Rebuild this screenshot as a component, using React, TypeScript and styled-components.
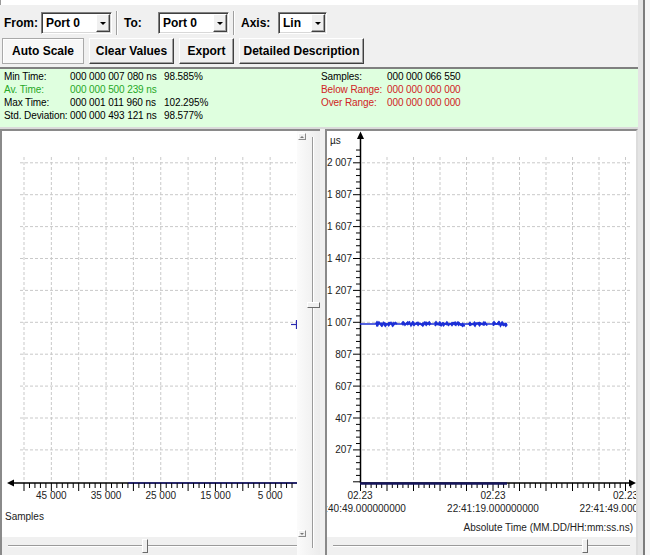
import React from "react";
import styled, { createGlobalStyle, css } from "styled-components";

const GlobalStyle = createGlobalStyle`
  html, body {
    margin: 0;
    padding: 0;
    background: #f0f0f0;
  }
  body {
    font-family: "Liberation Sans", Arial, sans-serif;
  }
`;

const Window = styled.div`
  display: flex;
  width: 650px;
  height: 555px;
  overflow: hidden;
  background: #f0f0f0;
`;

const Main = styled.div`
  width: 638px;
  display: flex;
  flex-direction: column;
`;

const SideStrip = styled.div`
  flex: 1;
  background: linear-gradient(to right, #e4e4e4 0 5px, #7c7c7c 5px 7px, #f6f6f6 7px);
`;

const TopStrip = styled.div`
  height: 5px;
  box-sizing: border-box;
  background: #fff;
  border-left: 1px solid #9a9a9a;
`;

const Toolbar = styled.div`
  height: 62px;
  box-sizing: border-box;
  padding-top: 7px;
  display: flex;
  flex-direction: column;
  gap: 4px;
`;

const ToolRow = styled.div`
  display: flex;
  align-items: center;
  height: 22px;
  padding-left: 4px;
`;

const Label = styled.span<{ $w: number }>`
  width: ${(p) => p.$w}px;
  font: bold 12px "Liberation Sans", Arial, sans-serif;
  color: #000;
`;

const Select = styled.div<{ $w: number }>`
  width: ${(p) => p.$w}px;
  height: 22px;
  box-sizing: border-box;
  display: flex;
  align-items: center;
  justify-content: space-between;
  padding: 0 1px 0 4px;
  background: #fff;
  border: 1px solid;
  border-color: #808080 #fff #fff #808080;
  box-shadow: inset 1px 1px 0 #404040, inset -1px -1px 0 #d8d8d8;
  font: bold 12px "Liberation Sans", Arial, sans-serif;
  color: #000;
`;

const DropButton = styled.span`
  width: 14px;
  height: 18px;
  box-sizing: border-box;
  display: flex;
  align-items: center;
  justify-content: center;
  background: #f0f0f0;
  border: 1px solid;
  border-color: #fff #404040 #404040 #fff;
  box-shadow: inset -1px -1px 0 #a0a0a0;

  &::after {
    content: "";
    border-left: 3px solid transparent;
    border-right: 3px solid transparent;
    border-top: 3px solid #000;
  }
`;

const Separator = styled.span`
  width: 0;
  height: 24px;
  margin: 0 6px 0 4px;
  border-left: 1px solid #a0a0a0;
  border-right: 1px solid #fff;
`;

const ButtonRow = styled.div`
  display: flex;
  gap: 5px;
  padding-left: 2px;
`;

const Button = styled.button<{ $w: number; $pressed?: boolean }>`
  width: ${(p) => p.$w}px;
  height: 26px;
  padding: 0;
  font: bold 12px "Liberation Sans", Arial, sans-serif;
  color: #000;
  background: #f0f0f0;
  border: 1px solid;
  border-color: #fff #404040 #404040 #fff;
  box-shadow: inset -1px -1px 0 #a0a0a0;
  ${(p) =>
    p.$pressed &&
    css`
      background: #f7f7f7;
      border-color: #a9a9a9;
      box-shadow: inset 1px 1px 0 #fff;
    `}
`;

const StatsPanel = styled.div`
  height: 62px;
  box-sizing: border-box;
  border-top: 2px solid #7f7f7f;
  border-bottom: 2px solid #dadada;
  background: #dfffdf;
  padding: 1px 0 0 4px;
  display: grid;
  grid-template-columns: 66px 94px 157px 66px 1fr;
  grid-auto-rows: 13px;
  font-size: 10px;
  line-height: 13px;
  letter-spacing: -0.1px;
`;

const Cell = styled.span<{ $tone?: "ok" | "bad" }>`
  white-space: nowrap;
  color: ${(p) => (p.$tone === "ok" ? "#26a826" : p.$tone === "bad" ? "#d02424" : "#000")};
`;

const ChartsRow = styled.div`
  flex: 1;
  display: flex;
`;

const LeftPanel = styled.div`
  width: 320px;
  box-sizing: border-box;
  display: flex;
  border-left: 2px solid #8a8a8a;
  border-top: 2px solid #8a8a8a;
`;

const PlotColumn = styled.div`
  width: 295px;
  display: flex;
  flex-direction: column;
`;

const Splitter = styled.div`
  width: 5px;
  background: #f0f0f0;
`;

const RightPanel = styled.div`
  flex: 1;
  box-sizing: border-box;
  display: flex;
  flex-direction: column;
  border-left: 2px solid #8a8a8a;
  border-top: 2px solid #8a8a8a;
  border-right: 2px solid #dcdcdc;
`;

const Plot = styled.svg`
  display: block;
  height: 406px;
  background: #fff;
  font-family: "Liberation Sans", Arial, sans-serif;
  font-size: 10px;
`;

const HScroll = styled.div<{ $pl: number; $pr: number }>`
  flex: 1;
  display: flex;
  align-items: center;
  padding: 0 ${(p) => p.$pr}px 0 ${(p) => p.$pl}px;
  background: #f0f0f0;
`;

const TrackH = styled.div`
  position: relative;
  flex: 1;
  height: 0;
  border-top: 1px solid #9a9a9a;
  border-bottom: 1px solid #fff;
`;

const ThumbH = styled.span`
  position: absolute;
  top: -7px;
  width: 4px;
  height: 12px;
  background: #f0f0f0;
  border: 1px solid;
  border-color: #fff #6a6a6a #6a6a6a #fff;
`;

const VScroll = styled.div`
  width: 23px;
  display: flex;
  background: linear-gradient(to right, #fbfbfb, #ececec);
`;

const ArrowCol = styled.div`
  width: 9px;
  margin-left: 1px;
  display: flex;
  flex-direction: column;
  justify-content: space-between;
  padding: 2px 0 18px;
`;

const ArrowBox = styled.span<{ $dir: "up" | "down" }>`
  width: 8px;
  height: 7px;
  box-sizing: border-box;
  display: flex;
  align-items: center;
  justify-content: center;
  background: #f0f0f0;
  border: 1px solid;
  border-color: #fff #8a8a8a #8a8a8a #fff;

  &::after {
    content: "";
    border-left: 2px solid transparent;
    border-right: 2px solid transparent;
    ${(p) =>
      p.$dir === "up" ? "border-bottom: 2px solid #777;" : "border-top: 2px solid #777;"}
  }
`;

const TrackV = styled.div`
  position: relative;
  width: 0;
  margin: 6px 0 7px 5px;
  border-left: 1px solid #9a9a9a;
  border-right: 1px solid #fff;
`;

const ThumbV = styled.span`
  position: absolute;
  left: -6px;
  width: 11px;
  height: 4px;
  background: #f0f0f0;
  border: 1px solid;
  border-color: #fff #6a6a6a #6a6a6a #fff;
`;

const GRID = "#c9c9c9";
const TRACE = "#1c2fd6";
const rowsY = Array.from({ length: 10 }, (_, i) => 162.8 + i * 31.9);

function LeftChart() {
  const cols = Array.from({ length: 10 }, (_, i) => 24 + i * 27.35);
  const ticks: React.ReactNode[] = [];
  for (let k = 0; 24 + k * 5.47 <= 297; k++) {
    const x = 24 + k * 5.47;
    ticks.push(<line key={k} x1={x} x2={x} y1={483} y2={k % 5 === 0 ? 491 : 488} stroke="#000" />);
  }
  const labels = ["45 000", "35 000", "25 000", "15 000", "5 000"];
  return (
    <Plot width={295} viewBox="2 131 295 406">
      {rowsY.map((y) => (
        <line key={y} x1={20} x2={296} y1={y} y2={y} stroke={GRID} strokeDasharray="3 2" />
      ))}
      {cols.map((x) => (
        <line key={x} x1={x} x2={x} y1={157} y2={483} stroke={GRID} strokeDasharray="3 2" />
      ))}
      <line x1={12} x2={297} y1={483} y2={483} stroke="#000" strokeWidth={1.5} />
      <line x1={128} x2={297} y1={483} y2={483} stroke="#20207a" strokeWidth={1.5} />
      <polygon points="7,483 14,479.5 14,486.5" fill="#000" />
      {ticks}
      {labels.map((t, i) => (
        <text key={t} x={cols[1 + i * 2]} y={499} textAnchor="middle" fill="#222">
          {t}
        </text>
      ))}
      <text x={5} y={520} fill="#222">
        Samples
      </text>
      <line x1={291} x2={297} y1={324.5} y2={324.5} stroke="#2a2ab0" strokeWidth={1.2} />
      <line x1={296.5} x2={296.5} y1={320} y2={329} stroke="#2a2ab0" strokeWidth={1.2} />
    </Plot>
  );
}

function noise(seed: number) {
  let s = seed;
  return () => {
    s = (s * 9301 + 49297) % 233280;
    return s / 233280;
  };
}

function RightChart() {
  const cols = Array.from({ length: 10 }, (_, i) => 387 + i * 26.5);
  const yTicks: React.ReactNode[] = [];
  for (let k = -2; 162.8 + k * 6.38 <= 482; k++) {
    const y = 162.8 + k * 6.38;
    yTicks.push(<line key={k} x1={k % 5 === 0 ? 353 : 356} x2={360} y1={y} y2={y} stroke="#000" />);
  }
  const xTicks: React.ReactNode[] = [];
  for (let k = 0; 360.5 + k * 5.3 <= 632; k++) {
    const x = 360.5 + k * 5.3;
    xTicks.push(<line key={k} x1={x} x2={x} y1={483} y2={k % 5 === 0 ? 491 : 488} stroke="#000" />);
  }
  const yLabels = ["2 007", "1 807", "1 607", "1 407", "1 207", "1 007", "807", "607", "407", "207"];
  const rand = noise(17);
  const clusters: [number, number][] = [
    [376, 398],
    [402, 430],
    [435, 465],
    [469, 487],
    [493, 507],
  ];
  const jitter = clusters.map(([a, b]) => {
    const pts: string[] = [];
    for (let x = a; x <= b; x += 1.5) {
      pts.push(`${x.toFixed(1)},${(324 + (rand() - 0.5) * 4).toFixed(1)}`);
    }
    return pts.join(" ");
  });
  const markers: { x: number; y: number }[] = [];
  clusters.forEach(([a, b]) => {
    for (let x = a + 1; x <= b; x += 3.2 + rand() * 2) {
      markers.push({ x, y: 324 + (rand() - 0.5) * 2 });
    }
  });
  const times = [
    { x: 360, t: "22:40:49.000000000" },
    { x: 493, t: "22:41:19.000000000" },
    { x: 625.5, t: "22:41:49.000000000" },
  ];
  return (
    <Plot width={309} viewBox="327 131 309 406">
      {rowsY.map((y) => (
        <line key={y} x1={362} x2={632} y1={y} y2={y} stroke={GRID} strokeDasharray="3 2" />
      ))}
      {cols.map((x) => (
        <line key={x} x1={x} x2={x} y1={157} y2={483} stroke={GRID} strokeDasharray="3 2" />
      ))}
      <text x={330} y={144} fill="#222">
        µs
      </text>
      {yLabels.map((t, i) => (
        <text key={t} x={352} y={rowsY[i] + 3.5} textAnchor="end" fill="#222">
          {t}
        </text>
      ))}
      {yTicks}
      {xTicks}
      <line x1={360.5} x2={360.5} y1={137} y2={483} stroke="#000" strokeWidth={1.5} />
      <polygon points="360.5,131.5 357,139 364,139" fill="#000" />
      <line x1={360} x2={630} y1={483} y2={483} stroke="#000" strokeWidth={1.5} />
      <line x1={360} x2={507} y1={483.5} y2={483.5} stroke="#14145a" strokeWidth={2.5} />
      <polygon points="636,483 629,479.5 629,486.5" fill="#000" />
      <line x1={360} x2={507} y1={324} y2={324} stroke={TRACE} strokeWidth={1.4} />
      {jitter.map((p, i) => (
        <polyline key={i} points={p} fill="none" stroke={TRACE} strokeWidth={1.8} />
      ))}
      {markers.map((m, i) => (
        <polygon
          key={i}
          points={`${m.x},${m.y - 2.6} ${m.x + 2},${m.y} ${m.x},${m.y + 2.6} ${m.x - 2},${m.y}`}
          fill={TRACE}
        />
      ))}
      {times.map(({ x, t }) => (
        <React.Fragment key={t}>
          <text x={x} y={499} textAnchor="middle" fill="#222">
            02.23
          </text>
          <text x={x} y={511.5} textAnchor="middle" fill="#222">
            {t}
          </text>
        </React.Fragment>
      ))}
      <text x={633} y={530.5} textAnchor="end" fill="#222">
        Absolute Time (MM.DD/HH:mm:ss.ns)
      </text>
    </Plot>
  );
}

const stats: { label: string; value: string; pct: string; tone?: "ok"; rLabel: string; rValue: string; rTone?: "bad" }[] = [
  { label: "Min Time:", value: "000 000 007 080 ns", pct: "98.585%", rLabel: "Samples:", rValue: "000 000 066 550" },
  { label: "Av. Time:", value: "000 000 500 239 ns", pct: "", tone: "ok", rLabel: "Below Range:", rValue: "000 000 000 000", rTone: "bad" },
  { label: "Max Time:", value: "000 001 011 960 ns", pct: "102.295%", rLabel: "Over Range:", rValue: "000 000 000 000", rTone: "bad" },
  { label: "Std. Deviation:", value: "000 000 493 121 ns", pct: "98.577%", rLabel: "", rValue: "" },
];

export default function App() {
  return (
    <Window>
      <GlobalStyle />
      <Main>
        <TopStrip />
        <Toolbar>
          <ToolRow>
            <Label $w={37}>From:</Label>
            <Select $w={71}>
              Port 0
              <DropButton />
            </Select>
            <Separator />
            <Label $w={34}>To:</Label>
            <Select $w={71}>
              Port 0
              <DropButton />
            </Select>
            <Separator />
            <Label $w={37}>Axis:</Label>
            <Select $w={49}>
              Lin
              <DropButton />
            </Select>
          </ToolRow>
          <ButtonRow>
            <Button $w={82} $pressed>
              Auto Scale
            </Button>
            <Button $w={85}>Clear Values</Button>
            <Button $w={55}>Export</Button>
            <Button $w={125}>Detailed Description</Button>
          </ButtonRow>
        </Toolbar>
        <StatsPanel>
          {stats.map((s) => (
            <React.Fragment key={s.label}>
              <Cell $tone={s.tone}>{s.label}</Cell>
              <Cell $tone={s.tone}>{s.value}</Cell>
              <Cell>{s.pct}</Cell>
              <Cell $tone={s.rTone}>{s.rLabel}</Cell>
              <Cell $tone={s.rTone}>{s.rValue}</Cell>
            </React.Fragment>
          ))}
        </StatsPanel>
        <ChartsRow>
          <LeftPanel>
            <PlotColumn>
              <LeftChart />
              <HScroll $pl={6} $pr={0}>
                <TrackH>
                  <ThumbH style={{ left: "46.5%" }} />
                </TrackH>
              </HScroll>
            </PlotColumn>
            <VScroll>
              <ArrowCol>
                <ArrowBox $dir="up" />
                <ArrowBox $dir="down" />
              </ArrowCol>
              <TrackV>
                <ThumbV style={{ top: 165 }} />
              </TrackV>
            </VScroll>
          </LeftPanel>
          <Splitter />
          <RightPanel>
            <RightChart />
            <HScroll $pl={6} $pr={6}>
              <TrackH>
                <ThumbH style={{ left: "83.8%" }} />
              </TrackH>
            </HScroll>
          </RightPanel>
        </ChartsRow>
      </Main>
      <SideStrip />
    </Window>
  );
}
